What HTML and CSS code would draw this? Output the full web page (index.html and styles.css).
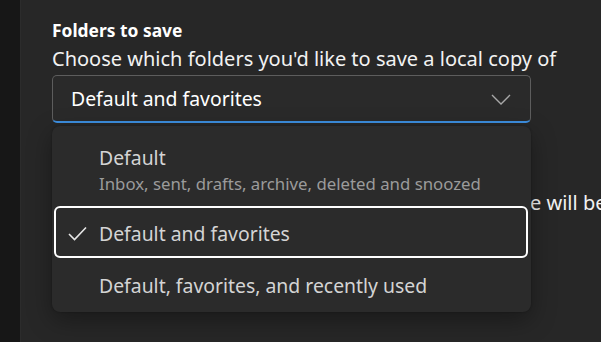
FILE: index.html
```html
<!DOCTYPE html>
<html lang="en">
<head>
<meta charset="utf-8">
<link rel="stylesheet" href="styles.css">
</head>
<body>
<div class="app">
  <div class="rail"></div>
  <main class="main">
    <h2 class="title">Folders to save</h2>
    <p class="desc">Choose which folders you'd like to save a local copy of</p>
    <div class="field">
      <div class="select">
        <span class="select-text">Default and favorites</span>
        <svg class="chevron" width="20" height="11" viewBox="0 0 20 11"><path d="M1 1 L10 10 L19 1" fill="none" stroke="#a8a8a8" stroke-width="1.4"/></svg>
      </div>
      <div class="menu">
        <div class="item item-tall">
          <span class="check-slot"></span>
          <div class="item-body">
            <div class="item-label">Default</div>
            <div class="item-sub">Inbox, sent, drafts, archive, deleted and snoozed</div>
          </div>
        </div>
        <div class="item item-selected">
          <span class="check-slot"><svg width="19" height="15" viewBox="0 0 19 15"><path d="M1 8 L6.5 13.5 L18 1.5" fill="none" stroke="#e6e6e6" stroke-width="1.6"/></svg></span>
          <div class="item-body"><div class="item-label">Default and favorites</div></div>
        </div>
        <div class="item">
          <span class="check-slot"></span>
          <div class="item-body"><div class="item-label">Default, favorites, and recently used</div></div>
        </div>
      </div>
    </div>
    <p class="desc behind"><span class="covered">Messages in these folders from the past year of storag</span><span>e will be saved on this device</span></p>
  </main>
</div>
</body>
</html>
```
FILE: styles.css
```css
html, body {
  margin: 0;
  padding: 0;
  background: #272727;
  font-family: "Noto Sans", "Open Sans", sans-serif;
  overflow: hidden;
}
.app {
  display: flex;
  width: 601px;
  height: 342px;
}
.rail {
  width: 20px;
  flex: none;
  background: #171717;
  border-right: 1px solid #2c2c2c;
}
.main {
  flex: 1;
  padding: 18px 0 0 31px;
  white-space: nowrap;
  overflow: hidden;
}
.title {
  margin: 0;
  font-size: 17.4px;
  font-weight: 700;
  color: #ffffff;
  line-height: 24px;
}
.desc {
  margin: 4px 0 0;
  font-size: 20px;
  color: #f2f2f2;
  line-height: 26px;
}
.field {
  position: relative;
  width: 479px;
  margin-top: 3px;
}
.select {
  box-sizing: border-box;
  height: 48px;
  border: 1px solid #5d5d5d;
  border-bottom: 2px solid #3d8fe0;
  border-radius: 5px;
  background: #2a2a2a;
  display: flex;
  align-items: center;
  justify-content: space-between;
  padding: 0 19px 0 18px;
}
.select-text {
  color: #ffffff;
  font-size: 19.4px;
}
.chevron { display: block; margin-top: 1px; }
.menu {
  position: absolute;
  left: 0;
  top: 51px;
  width: 479px;
  box-sizing: border-box;
  padding: 4px 3px 2px 2px;
  background: #2b2b2b;
  border-radius: 8px;
  box-shadow: 0 8px 24px rgba(0,0,0,0.35), 0 0 2px rgba(0,0,0,0.3);
  z-index: 2;
}
.item {
  box-sizing: border-box;
  height: 52px;
  display: flex;
  align-items: center;
  border: 2px solid transparent;
  border-radius: 6px;
  padding-top: 4px;
}
.item-tall {
  height: 76px;
  padding-top: 5px;
}
.item-selected { border-color: #ffffff; }
.check-slot {
  box-sizing: border-box;
  width: 43px;
  flex: none;
  display: flex;
  padding-left: 12px;
}
.check-slot svg { display: block; margin-top: -2px; }
.item-label {
  color: #d4d4d4;
  font-size: 19.4px;
  line-height: 24px;
}
.item-sub {
  color: #9b9b9b;
  font-size: 16.8px;
  line-height: 22px;
  margin-top: 3px;
}
.behind {
  display: flex;
  margin-top: 67px;
}
.covered {
  flex: 0 0 478px;
  overflow: hidden;
}
```
